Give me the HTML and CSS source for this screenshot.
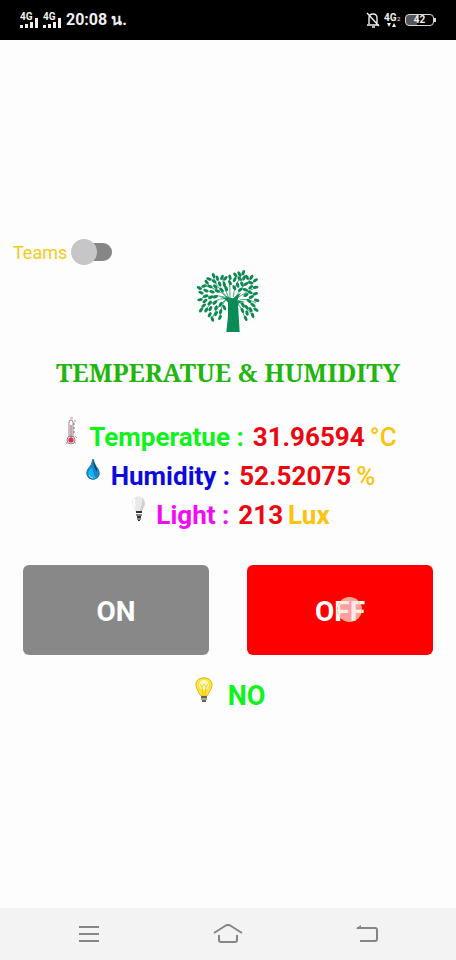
FILE: index.html
```html
<!DOCTYPE html>
<html lang="en">
<head>
<meta charset="utf-8">
<meta name="viewport" content="width=device-width, initial-scale=1">
<title>Temperatue &amp; Humidity</title>
<link rel="stylesheet" href="styles.css">
</head>
<body>
<header class="status">
  <div class="status-group">
    <svg class="signal" viewBox="0 0 42 20" role="img" aria-label="Signal strength">
      <g fill="#f0f0f0">
        <path d="M0 15h3v3H0zM5 14h3v4H5zM10 12h3v6h-3zM15 8h3v10h-3zM23 15h3v3h-3zM28 14h3v4h-3zM33 12h3v6h-3zM38 8h3v10h-3z"/>
        <text x="0" y="10" class="net">4G</text>
        <text x="23" y="10" class="net">4G</text>
      </g>
    </svg>
    <span class="clock">20:08 น.</span>
  </div>
  <div class="status-group status-right">
    <svg class="bell" viewBox="0 0 14 16" fill="none" stroke="#f0f0f0" stroke-width="1.4" aria-hidden="true">
      <path d="M1 13h12M3 12V6q0-4 4-4t4 4v6M1 1l12 13M6 15h3"/>
    </svg>
    <svg class="mobile" viewBox="0 0 17 16" fill="#f0f0f0" role="img" aria-label="4G SIM 2">
      <text x="0" y="9" class="net">4G</text>
      <text x="13" y="9" class="sim">2</text>
      <path d="M3 11h4l-2 4zM8 15h4l-2-4z"/>
    </svg>
    <span class="battery">42</span>
  </div>
</header>

<main class="screen">
  <label class="teams">Teams <input class="switch" type="checkbox" role="switch"></label>

  <svg class="tree" viewBox="24 20 192 192" aria-hidden="true">
    <defs><ellipse id="leaf" rx="8.5" ry="4.6"/></defs>
    <g fill="none" stroke="#169260" stroke-width="2.4">
      <path d="M124 112Q98 92 42 106M118 106Q90 78 48 70M112 98Q84 72 76 44M122 106Q106 72 104 48M126 106Q126 72 124 46M136 104Q138 72 164 32M140 108Q158 76 190 48M142 110Q168 92 206 74M146 116Q176 104 204 122M148 118Q172 128 196 164M116 108Q76 108 52 142M120 110Q92 122 74 164M114 110Q100 128 96 160M145 118Q162 136 170 164"/>
    </g>
    <path fill="#0b8b55" d="M110 99Q125 108 135 108Q146 98 159 91Q149 104 148 117Q162 114 171 120Q153 119 150 126L155 209H115Q122 165 120 121Q113 109 97 103Q113 106 117 108Z"/>
    <g fill="#0c8853">
      <use href="#leaf" transform="translate(34 77) rotate(25)"/>
      <use href="#leaf" transform="translate(48 71) rotate(-15)"/>
      <use href="#leaf" transform="translate(56 60) rotate(50)"/>
      <use href="#leaf" transform="translate(63 50) rotate(15)"/>
      <use href="#leaf" transform="translate(77 40) rotate(65)"/>
      <use href="#leaf" transform="translate(78 57) rotate(35)"/>
      <use href="#leaf" transform="translate(88 48) rotate(75)"/>
      <use href="#leaf" transform="translate(102 45) rotate(-65)"/>
      <use href="#leaf" transform="translate(112 48) rotate(-45)"/>
      <use href="#leaf" transform="translate(126 45) rotate(75)"/>
      <use href="#leaf" transform="translate(126 61) rotate(60)"/>
      <use href="#leaf" transform="translate(140 52) rotate(-65)"/>
      <use href="#leaf" transform="translate(142 38) rotate(50)"/>
      <use href="#leaf" transform="translate(154 35) rotate(60)"/>
      <use href="#leaf" transform="translate(166 31) rotate(-70)"/>
      <use href="#leaf" transform="translate(155 49) rotate(45)"/>
      <use href="#leaf" transform="translate(168 47) rotate(-60)"/>
      <use href="#leaf" transform="translate(177 45) rotate(60)"/>
      <use href="#leaf" transform="translate(190 45) rotate(-55)"/>
      <use href="#leaf" transform="translate(202 54) rotate(-35)"/>
      <use href="#leaf" transform="translate(188 61) rotate(15)"/>
      <use href="#leaf" transform="translate(203 75) rotate(-5)"/>
      <use href="#leaf" transform="translate(188 75) rotate(-40)"/>
      <use href="#leaf" transform="translate(174 65) rotate(-30)"/>
      <use href="#leaf" transform="translate(162 65) rotate(65)"/>
      <use href="#leaf" transform="translate(149 68) rotate(75)"/>
      <use href="#leaf" transform="translate(139 76) rotate(60)"/>
      <use href="#leaf" transform="translate(157 82) rotate(-35)"/>
      <use href="#leaf" transform="translate(172 82) rotate(15)"/>
      <use href="#leaf" transform="translate(186 90) rotate(20)"/>
      <use href="#leaf" transform="translate(202 94) rotate(-15)"/>
      <use href="#leaf" transform="translate(190 104) rotate(-25)"/>
      <use href="#leaf" transform="translate(206 114) rotate(15)"/>
      <use href="#leaf" transform="translate(174 98) rotate(-25)"/>
      <use href="#leaf" transform="translate(183 116) rotate(35)"/>
      <use href="#leaf" transform="translate(195 128) rotate(35)"/>
      <use href="#leaf" transform="translate(204 142) rotate(35)"/>
      <use href="#leaf" transform="translate(188 142) rotate(60)"/>
      <use href="#leaf" transform="translate(176 135) rotate(45)"/>
      <use href="#leaf" transform="translate(165 128) rotate(60)"/>
      <use href="#leaf" transform="translate(163 144) rotate(65)"/>
      <use href="#leaf" transform="translate(177 152) rotate(75)"/>
      <use href="#leaf" transform="translate(194 159) rotate(70)"/>
      <use href="#leaf" transform="translate(173 168) rotate(65)"/>
      <use href="#leaf" transform="translate(39 91) rotate(25)"/>
      <use href="#leaf" transform="translate(54 85) rotate(25)"/>
      <use href="#leaf" transform="translate(66 72) rotate(25)"/>
      <use href="#leaf" transform="translate(82 73) rotate(45)"/>
      <use href="#leaf" transform="translate(95 65) rotate(65)"/>
      <use href="#leaf" transform="translate(109 66) rotate(75)"/>
      <use href="#leaf" transform="translate(115 79) rotate(70)"/>
      <use href="#leaf" transform="translate(101 83) rotate(45)"/>
      <use href="#leaf" transform="translate(88 86) rotate(20)"/>
      <use href="#leaf" transform="translate(72 88) rotate(15)"/>
      <use href="#leaf" transform="translate(53 101) rotate(-15)"/>
      <use href="#leaf" transform="translate(36 112) rotate(-10)"/>
      <use href="#leaf" transform="translate(51 116) rotate(-35)"/>
      <use href="#leaf" transform="translate(68 105) rotate(-25)"/>
      <use href="#leaf" transform="translate(82 103) rotate(-15)"/>
      <use href="#leaf" transform="translate(65 122) rotate(-45)"/>
      <use href="#leaf" transform="translate(47 130) rotate(-40)"/>
      <use href="#leaf" transform="translate(39 143) rotate(-55)"/>
      <use href="#leaf" transform="translate(55 143) rotate(-55)"/>
      <use href="#leaf" transform="translate(67 139) rotate(-60)"/>
      <use href="#leaf" transform="translate(81 121) rotate(-40)"/>
      <use href="#leaf" transform="translate(84 137) rotate(-65)"/>
      <use href="#leaf" transform="translate(98 126) rotate(-60)"/>
      <use href="#leaf" transform="translate(109 136) rotate(65)"/>
      <use href="#leaf" transform="translate(98 148) rotate(-75)"/>
      <use href="#leaf" transform="translate(84 154) rotate(-65)"/>
      <use href="#leaf" transform="translate(65 157) rotate(-60)"/>
      <use href="#leaf" transform="translate(96 165) rotate(-65)"/>
      <use href="#leaf" transform="translate(73 170) rotate(70)"/>
    </g>
  </svg>

  <h1 class="title">TEMPERATUE &amp; HUMIDITY</h1>

  <section class="readings" aria-label="Readings">
    <p class="reading">
      <svg class="icon" viewBox="0 0 16 28" aria-hidden="true">
        <path d="M6 20V5q0-2 2-2t2 2v15" fill="#fff" stroke="#888"/>
        <circle cx="8" cy="23" r="4" fill="#eee" stroke="#888"/>
        <circle cx="8" cy="23" r="2.6" fill="#e92845"/>
        <path d="M8 22V8" stroke="#b9606c" stroke-width="1.2"/>
        <path d="M10 7h2M10 11h2M10 15h2" stroke="#777"/>
        <path d="M7 1h3M12 3v2M12 19l2 2M3 25l1 2M12 26h1" stroke="#f4798a"/>
      </svg>
      <span class="name temp">Temperatue :</span><span class="value">31.96594</span><span class="unit">°C</span>
    </p>
    <p class="reading">
      <svg class="icon" viewBox="0 0 16 28" aria-hidden="true">
        <path d="M8 3Q10 10 13 13Q16 19 12 22Q8 25 4 22Q0 18 3 13Q7 9 8 3Z" fill="#1687cb" stroke="#155f8c" stroke-width=".8"/>
        <path d="M7 11Q1 17 4 20L8 23L11 22Q8 18 7 11Z" fill="#14b5ef"/>
        <path d="M8 4Q9 12 12 16L12 13Z" fill="#123f66"/>
        <path d="M4 19q1 3 4 3" fill="none" stroke="#93e3ff"/>
      </svg>
      <span class="name humid">Humidity :</span><span class="value">52.52075</span><span class="unit">%</span>
    </p>
    <p class="reading">
      <svg class="icon" viewBox="0 0 16 28" aria-hidden="true">
        <path d="M3 4Q8-1 13 3Q17 7 14 12L12 18H6L3 10Q1 7 3 4Z" fill="#e9e9e9"/>
        <path d="M12 3Q16 6 14 11L12 17H9Q13 10 12 3Z" fill="#cfcfcf"/>
        <path d="M5 4Q3 7 5 11" fill="none" stroke="#fff" stroke-width="2"/>
        <path d="M6 17h6M7 22h4M8 25h2" stroke="#333" stroke-width="2"/>
        <path d="M6 20h6M7 24h4" stroke="#888" stroke-width="2"/>
      </svg>
      <span class="name light">Light :</span><span class="value">213</span><span class="unit heavy">Lux</span>
    </p>
  </section>

  <div class="actions">
    <button class="btn" type="button">ON</button>
    <button class="btn btn-off" type="button">OFF<span class="touch"></span></button>
  </div>

  <p class="state">
    <svg class="lamp" viewBox="0 0 18 28" aria-hidden="true">
      <path d="M5 18L2 12Q-1 5 4 2Q9-1 14 2Q19 6 16 12L12 19H6Z" fill="#ffe52d" stroke="#d8b53c"/>
      <circle cx="9" cy="8" r="5" fill="#fff8b9"/>
      <path d="M5 7l2 3 2-3 2 3 2-3M7 10l1 8M11 10l-1 8" fill="none" stroke="#e3bd24" stroke-width=".8"/>
      <path d="M6 20h6M7 24h4" stroke="#626262" stroke-width="2"/>
      <path d="M6 22h6" stroke="#b5a77b" stroke-width="2"/>
    </svg>
    <span>NO</span>
  </p>
</main>

<nav class="navbar" aria-label="System">
  <button class="nav-btn" type="button" aria-label="Recent apps">
    <svg class="nav-icon" viewBox="0 0 30 20"><path d="M5 3h20M5 10h20M5 17h20"/></svg>
  </button>
  <button class="nav-btn" type="button" aria-label="Home">
    <svg class="nav-icon" viewBox="0 0 30 20"><path d="M1 9L12 2Q15 0 18 2L29 9M6 11v5q0 2 2 2h14q2 0 2-2v-5"/></svg>
  </button>
  <button class="nav-btn" type="button" aria-label="Back">
    <svg class="nav-icon" viewBox="0 0 30 20"><path d="M5 4h18q2 0 2 2v9q0 2-2 2H8"/><path class="tip" d="M4 4.5L9 1v3.5z"/></svg>
  </button>
</nav>
</body>
</html>
```

FILE: styles.css
```css
* {
  box-sizing: border-box;
}

body {
  margin: 0;
  min-height: 100vh;
  display: flex;
  flex-direction: column;
  background: #fdfdfd;
  font-family: Roboto, "Noto Sans", "Liberation Sans", sans-serif;
}

h1,
p {
  margin: 0;
}

.status {
  height: 40px;
  padding: 0 22px 0 20px;
  display: flex;
  align-items: center;
  justify-content: space-between;
  background: #000;
  color: #f0f0f0;
}

.status-group {
  display: flex;
  align-items: center;
  gap: 4px;
}

.signal {
  width: 42px;
  height: 20px;
}

.net {
  font-size: 10px;
  font-weight: 700;
}

.sim {
  font-size: 6px;
}

.clock {
  font-size: 16px;
  font-weight: 700;
  line-height: 20px;
}

.bell {
  width: 14px;
  height: 16px;
}

.mobile {
  width: 17px;
  height: 16px;
}

.battery {
  position: relative;
  width: 29px;
  height: 12px;
  border: 1px solid #d8d8d8;
  border-radius: 4px;
  background: linear-gradient(90deg, #555 42%, #000 42%);
  font-size: 10px;
  font-weight: 700;
  line-height: 10px;
  text-align: center;
}

.battery::after {
  content: "";
  position: absolute;
  top: 3px;
  right: -3px;
  width: 2px;
  height: 4px;
  background: #d8d8d8;
}

.screen {
  flex: 1;
  display: flex;
  flex-direction: column;
  align-items: center;
  padding: 198px 23px 0;
}

.teams {
  align-self: flex-start;
  margin-left: -10px;
  height: 28px;
  display: flex;
  align-items: center;
  gap: 4px;
  color: #f2cb16;
  font-size: 18px;
}

.switch {
  appearance: none;
  position: relative;
  width: 41px;
  height: 18px;
  margin: 0;
  border-radius: 9px;
  background: linear-gradient(90deg, transparent 30%, #868686 30%);
}

.switch::before {
  content: "";
  position: absolute;
  top: -4px;
  left: 0;
  width: 26px;
  height: 26px;
  border-radius: 50%;
  background: #c6c6c8;
}

.switch:checked::before {
  left: 15px;
}

.tree {
  width: 64px;
  height: 64px;
  margin-top: 3px;
}

.title {
  margin-top: 22px;
  color: #22b50e;
  font-family: "Noto Serif", "Liberation Serif", serif;
  font-size: 25px;
  font-weight: 700;
  line-height: 34px;
  white-space: nowrap;
}

.readings {
  margin-top: 28px;
  padding-left: 4px;
  display: flex;
  flex-direction: column;
  align-items: center;
}

.reading {
  display: flex;
  height: 39px;
  font-size: 26px;
  font-weight: 700;
  line-height: 41px;
  white-space: nowrap;
}

.icon {
  width: 16px;
  height: 28px;
  margin-right: 10px;
}

.name {
  margin-right: 9px;
}

.temp {
  color: #0df31b;
}

.humid {
  color: #0b0bdd;
}

.light {
  color: #f40af4;
}

.value {
  margin-right: 5px;
  color: #ec0710;
}

.unit {
  color: #fcc30b;
  font-weight: 500;
}

.heavy {
  font-weight: 700;
}

.actions {
  align-self: stretch;
  margin-top: 31px;
  display: grid;
  grid-template-columns: 1fr 1fr;
  gap: 38px;
}

.btn {
  position: relative;
  height: 90px;
  padding: 2px 0 0;
  border: 0;
  border-radius: 6px;
  background: #888;
  color: #fff;
  font: 700 28px Roboto, "Liberation Sans", sans-serif;
}

.btn-off {
  background: #f00;
}

.touch {
  position: absolute;
  top: 32px;
  left: 90px;
  width: 25px;
  height: 25px;
  border: 1px dashed #dfc34b;
  border-radius: 50%;
  background: rgb(255 225 225 / 70%);
}

.state {
  margin-top: 22px;
  padding-left: 4px;
  display: flex;
  gap: 15px;
  color: #0df31b;
  font-size: 27px;
  font-weight: 700;
  line-height: 38px;
}

.lamp {
  width: 18px;
  height: 28px;
}

.navbar {
  height: 52px;
  padding: 0 20px;
  display: grid;
  grid-template-columns: repeat(3, 1fr);
  background: #f3f3f3;
}

.nav-btn {
  display: grid;
  place-items: center;
  padding: 0;
  border: 0;
  background: none;
}

.nav-icon {
  width: 30px;
  height: 20px;
  fill: none;
  stroke: #858585;
  stroke-width: 2;
}

.nav-icon .tip {
  fill: #858585;
  stroke: none;
}
```
